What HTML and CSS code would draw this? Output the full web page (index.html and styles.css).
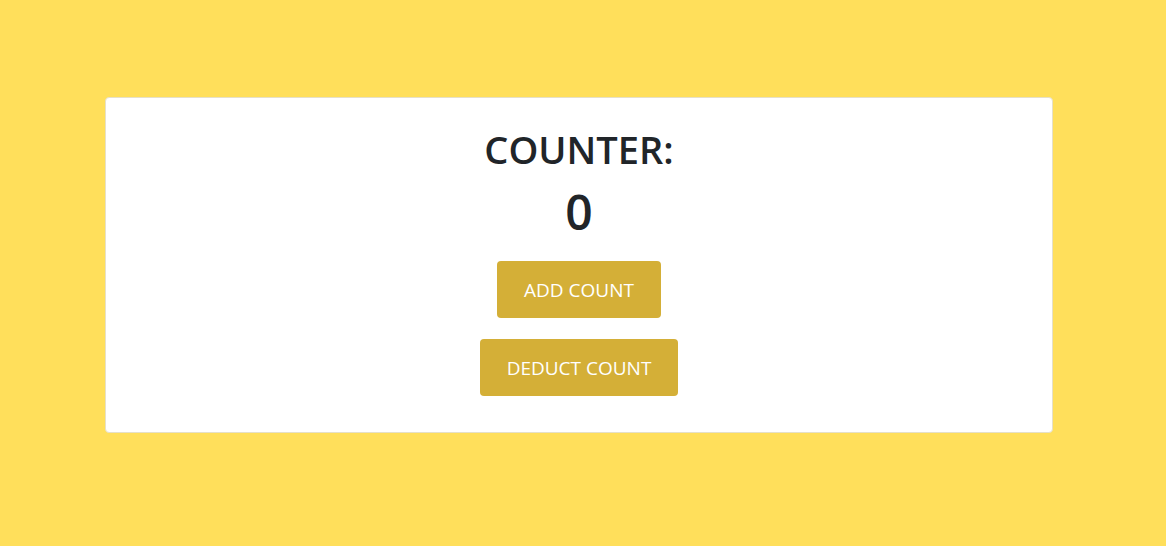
FILE: index.html
```html
<!DOCTYPE html>
<html>
<head>
<meta charset="utf-8">
<link rel="stylesheet" href="styles.css">
</head>
<body>
<main class="page">
  <section class="card">
    <h1 class="title">COUNTER:</h1>
    <div class="count">0</div>
    <button class="btn">ADD COUNT</button>
    <button class="btn">DEDUCT COUNT</button>
  </section>
</main>
</body>
</html>
```
FILE: styles.css
```css
html, body {
  margin: 0;
  padding: 0;
}
body {
  background: #ffdf5b;
  font-family: "Open Sans", "Noto Sans", sans-serif;
  color: #212529;
  height: 546px;
}
.page {
  padding: 97px 113px 0 105px;
}
.card {
  background: #fff;
  border: 1px solid #e6e0c8;
  border-radius: 4px;
  height: 336px;
  box-sizing: border-box;
  display: flex;
  flex-direction: column;
  align-items: center;
  padding-top: 28px;
}
.title {
  margin: 0;
  font-size: 38px;
  font-weight: 600;
  line-height: 46px;
}
.count {
  font-size: 48px;
  font-weight: 600;
  line-height: 64px;
  margin-top: 8px;
}
.btn {
  font-family: inherit;
  font-size: 19px;
  line-height: 31px;
  color: #fff;
  background: #d4af37;
  border: none;
  border-radius: 4px;
  padding: 14px 27px 12px;
  margin-top: 21px;
}
.count + .btn {
  margin-top: 17px;
}
```
